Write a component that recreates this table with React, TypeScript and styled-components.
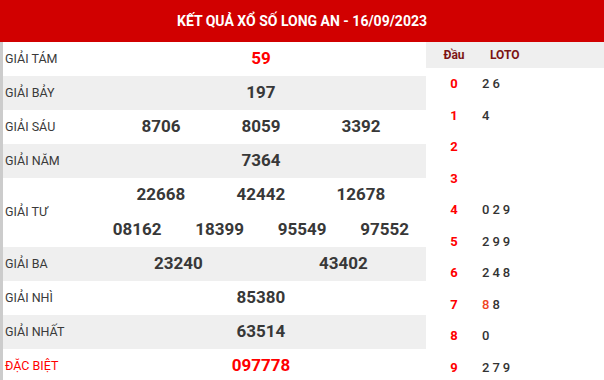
import React from 'react'
import styled, { createGlobalStyle } from 'styled-components'

const GlobalStyle = createGlobalStyle`
  body {
    margin: 0;
    font-family: Roboto, 'Liberation Sans', sans-serif;
    background: #fff;
  }
`

type Prize = { label: string; rows: string[][]; red?: boolean; special?: boolean }

const prizes: Prize[] = [
  { label: 'GIẢI TÁM', rows: [['59']], red: true },
  { label: 'GIẢI BẢY', rows: [['197']] },
  { label: 'GIẢI SÁU', rows: [['8706', '8059', '3392']] },
  { label: 'GIẢI NĂM', rows: [['7364']] },
  {
    label: 'GIẢI TƯ',
    rows: [
      ['22668', '42442', '12678'],
      ['08162', '18399', '95549', '97552'],
    ],
  },
  { label: 'GIẢI BA', rows: [['23240', '43402']] },
  { label: 'GIẢI NHÌ', rows: [['85380']] },
  { label: 'GIẢI NHẤT', rows: [['63514']] },
  { label: 'ĐẶC BIỆT', rows: [['097778']], red: true, special: true },
]

// loto tails, a leading "*" marks the special prize digit
const loto: string[][] = [
  ['2', '6'],
  ['4'],
  [],
  [],
  ['0', '2', '9'],
  ['2', '9', '9'],
  ['2', '4', '8'],
  ['*8', '8'],
  ['0'],
  ['2', '7', '9'],
]

export default function App() {
  return (
    <>
      <GlobalStyle />
      <Wrap>
        <Title>KẾT QUẢ XỔ SỐ LONG AN - 16/09/2023</Title>
        <Body>
          <Results>
            {prizes.map((p, i) => (
              <PrizeRow key={p.label} $alt={i % 2 === 1}>
                <Label $red={p.special}>{p.label}</Label>
                <Numbers>
                  {p.rows.map((r, j) => (
                    <NumberLine key={j} $cols={r.length}>
                      {r.map((n) => (
                        <Num key={n} $red={p.red}>
                          {n}
                        </Num>
                      ))}
                    </NumberLine>
                  ))}
                </Numbers>
              </PrizeRow>
            ))}
          </Results>
          <LotoPanel>
            <LotoHead>
              <HeadCell>Đầu</HeadCell>
              <HeadCell $loto>LOTO</HeadCell>
            </LotoHead>
            {loto.map((tails, d) => (
              <LotoRow key={d}>
                <Head>{d}</Head>
                <Tails>
                  {tails.map((t, k) => (
                    <Tail key={k} $hot={t.startsWith('*')}>
                      {t.replace('*', '')}
                    </Tail>
                  ))}
                </Tails>
              </LotoRow>
            ))}
          </LotoPanel>
        </Body>
      </Wrap>
    </>
  )
}

const Wrap = styled.div`
  width: 604px;
  display: flex;
  flex-direction: column;
`

const Title = styled.div`
  height: 42px;
  background: #d10000;
  color: #fff;
  font-size: 14px;
  font-weight: 700;
  display: flex;
  align-items: center;
  justify-content: center;
`

const Body = styled.div`
  display: flex;
`

const Results = styled.div`
  width: 423px;
  border-left: 3px solid #cccccc;
  display: flex;
  flex-direction: column;
`

const PrizeRow = styled.div<{ $alt: boolean }>`
  display: grid;
  grid-template-columns: 93px 1fr;
  align-items: center;
  min-height: 34px;
  background: ${(p) => (p.$alt ? '#efefef' : '#fff')};
`

const Label = styled.div<{ $red?: boolean }>`
  padding: 0 0 2px 2px;
  font-size: 12.5px;
  color: ${(p) => (p.$red ? '#f00' : '#3a3a3a')};
`

const Numbers = styled.div`
  display: flex;
  flex-direction: column;
`

const NumberLine = styled.div<{ $cols: number }>`
  display: grid;
  grid-template-columns: repeat(${(p) => p.$cols}, 1fr);
  padding: ${(p) => (p.$cols === 3 ? '0 15px' : '0')};
  height: 34px;
  align-items: center;
  & + & {
    height: 35px;
  }
`

const Num = styled.span<{ $red?: boolean }>`
  text-align: center;
  font-size: 17px;
  font-weight: 700;
  padding-bottom: 2px;
  color: ${(p) => (p.$red ? '#f00' : '#383838')};
`

const LotoPanel = styled.div`
  flex: 1;
  display: flex;
  flex-direction: column;
`

const LotoHead = styled.div`
  display: grid;
  grid-template-columns: 56px 1fr;
  align-items: center;
  height: 26px;
  background: #efefef;
`

const HeadCell = styled.div<{ $loto?: boolean }>`
  font-size: 12px;
  font-weight: 700;
  color: #7c1414;
  text-align: ${(p) => (p.$loto ? 'left' : 'center')};
  padding-left: ${(p) => (p.$loto ? '8px' : '0')};
`

const LotoRow = styled.div`
  display: grid;
  grid-template-columns: 56px 1fr;
  align-items: center;
  height: 31.5px;
`

const Head = styled.div`
  text-align: center;
  font-size: 13px;
  font-weight: 700;
  color: #f00;
`

const Tails = styled.div`
  display: flex;
  gap: 3px;
  font-size: 13px;
  font-weight: 500;
`

const Tail = styled.span<{ $hot: boolean }>`
  color: ${(p) => (p.$hot ? '#f0441f' : '#333')};
`
